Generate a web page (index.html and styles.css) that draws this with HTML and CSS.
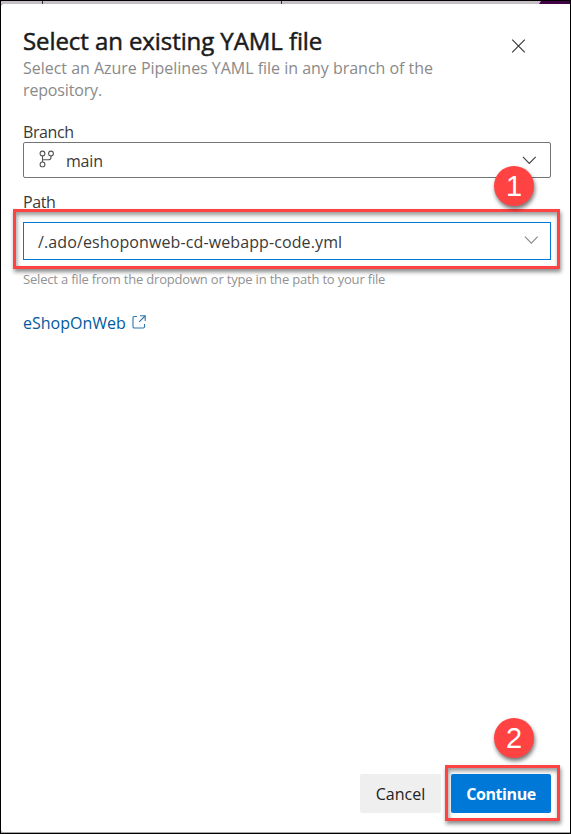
FILE: index.html
```html
<!DOCTYPE html>
<html lang="en">
<head>
<meta charset="utf-8">
<title>Select an existing YAML file</title>
<link rel="stylesheet" href="styles.css">
</head>
<body>
<div class="window">
  <div class="backdrop"><span class="backdrop-left"></span><span class="backdrop-mid"></span><span class="backdrop-right"></span><span class="backdrop-accent"></span></div>
  <section class="panel">
    <header class="header">
      <div class="heading">
        <h1 class="title">Select an existing YAML file</h1>
        <p class="subtitle"><span class="subtitle-first">Select an Azure Pipelines YAML file in any branch of the</span><br>repository.</p>
      </div>
      <svg class="close" viewBox="0 0 14 14"><path d="M1.2.7l12.6 12.6M13.8.7L1.2 13.3"/></svg>
    </header>
    <div class="label label-branch"><span>Branch</span></div>
    <div class="field">
      <svg class="branch-icon" viewBox="0 0 16 18"><circle cx="3.5" cy="3.5" r="2.4"/><circle cx="12" cy="3.5" r="2.4"/><circle cx="3.5" cy="14.4" r="2.4"/><path d="M3.5 6v6M12 6v1.2q0 2.6-2.6 2.6H3.5"/></svg>
      <span class="value-branch">main</span>
      <svg class="chevron" viewBox="0 0 14 8"><path d="M.9.9l6.4 6.4L13.7.9"/></svg>
    </div>
    <div class="label label-path"><span>Path</span></div>
    <div class="path-wrap">
      <div class="highlight highlight-path"></div>
      <div class="field field-active">
        <span class="value-path">/.ado/eshoponweb-cd-webapp-code.yml</span>
        <svg class="chevron chevron-light" viewBox="0 0 14 8"><path d="M.9.6l6.4 6.6L13.7.6"/></svg>
      </div>
      <div class="badge badge-path">1</div>
    </div>
    <p class="help">Select a file from the dropdown or type in the path to your file</p>
    <a class="link"><span class="link-text">eShopOnWeb</span><svg class="external" viewBox="0 0 14 14"><path d="M5 1.5H2.2Q1 1.5 1 2.7v9Q1 13 2.2 13h9.1q1.2 0 1.2-1.2V9M8 .8h5.2V6M13 1L7.2 6.8"/></svg></a>
    <footer class="actions">
      <button class="button"><span class="cancel-text">Cancel</span></button>
      <div class="primary-wrap">
        <div class="highlight highlight-button"></div>
        <button class="button primary"><span class="continue-text">Continue</span></button>
        <div class="badge badge-button">2</div>
      </div>
    </footer>
  </section>
</div>
</body>
</html>
```
FILE: styles.css
```css
* { box-sizing: border-box; }
body { margin: 0; background: #fff; font-family: "Open Sans", "Noto Sans", sans-serif; font-size: 16px; color: #3a3a3a; }
h1, p { margin: 0; }
svg { fill: none; display: block; flex: none; overflow: visible; }
.window { height: 834px; border: 1px solid #000; display: flex; flex-direction: column; background: #a5a5a5; padding-bottom: 1px; }
.backdrop { height: 3px; display: flex; background: #c5bfc5; }
.backdrop-left { width: 42px; border-right: 1px solid #333; }
.backdrop-mid { width: 239px; border-right: 1px solid #333; }
.backdrop-right { flex: 1; }
.backdrop-accent { width: 31px; background: #420044; clip-path: polygon(2px 0, 100% 0, 100% 100%, 0 100%); }
.panel { flex: 1; display: flex; flex-direction: column; background: #fff; padding: 24px 19px 19px 22px; border-radius: 3px 0 0 2px; }
.header { display: flex; justify-content: space-between; height: 94px; padding-right: 26px; }
.title { font-size: 24px; line-height: 26px; font-weight: 400; -webkit-text-stroke: .5px #1b1b1b; color: #1b1b1b; white-space: nowrap; letter-spacing: -.08px; }
.subtitle { margin-top: 3px; line-height: 22px; color: #8a8a8a; white-space: nowrap; letter-spacing: -.15px; }
.subtitle-first { letter-spacing: -.02px; }
.close { width: 14px; height: 14px; margin-top: 11px; stroke: #333; stroke-width: 1.1; }
.label { line-height: 20px; height: 20px; white-space: nowrap; letter-spacing: -.4px; }
.field { height: 36px; width: 528px; border: 1px solid #757575; border-radius: 2px; display: flex; align-items: center; padding: 0 14px; white-space: nowrap; }
.branch-icon { width: 16px; height: 18px; margin-right: 12px; margin-left: 1px; margin-top: -2px; stroke: #555; stroke-width: 1.1; }
.value-branch { padding-top: 2px; letter-spacing: -.2px; margin-left: -1px; }
.value-path { padding-top: 2px; letter-spacing: .11px; }
.chevron { width: 14px; height: 8px; margin-left: auto; stroke: #444; stroke-width: 1.2; }
.label-path { margin-top: 14px; margin-bottom: 10px; }
.path-wrap { position: relative; }
.field-active { height: 38px; border-color: #0078d4; border-radius: 0; padding-right: 12px; }
.chevron-light { stroke: #8b8b8b; margin-top: -3px; }
.highlight { position: absolute; border: 3px solid #ff4343; box-shadow: 1px 3px 4px rgba(0,0,0,.45), inset 1px 3px 4px rgba(0,0,0,.4); pointer-events: none; }
.highlight-path { left: -10px; top: -13px; width: 547px; height: 60px; }
.badge { position: absolute; width: 40px; height: 40px; border-radius: 50%; background: #ff4343; box-shadow: 1px 3px 4px rgba(0,0,0,.55); color: #fff; font: 29px/40px "Liberation Sans", Arial, sans-serif; text-align: center; }
.badge-path { left: 471px; top: -56px; }
.help { margin-top: 9px; font-size: 13px; line-height: 20px; color: #929292; white-space: nowrap; letter-spacing: -.19px; }
.link { margin-top: 24px; display: flex; align-items: center; height: 20px; line-height: 20px; color: #005a9e; }
.external { width: 14px; height: 14px; margin: -3px 0 0 6px; stroke: #2876b0; stroke-width: 1.1; }
.actions { margin-top: auto; display: flex; justify-content: flex-end; gap: 10px; }
.button { width: 81px; height: 39px; border: 0; border-radius: 2px; padding: 1px 0 0; background: #efefef; color: #222; font: 400 16px/38px "Open Sans", sans-serif; white-space: nowrap; }
.cancel-text, .continue-text { display: block; }
.primary-wrap { position: relative; }
.primary { position: relative; display: block; width: 100px; background: #0078d7; color: #fff; font-weight: 700; letter-spacing: -.4px; }
.highlight-button { left: -6px; top: -9px; width: 115px; height: 56px; }
.badge-button { left: 43px; top: -56px; }
```
